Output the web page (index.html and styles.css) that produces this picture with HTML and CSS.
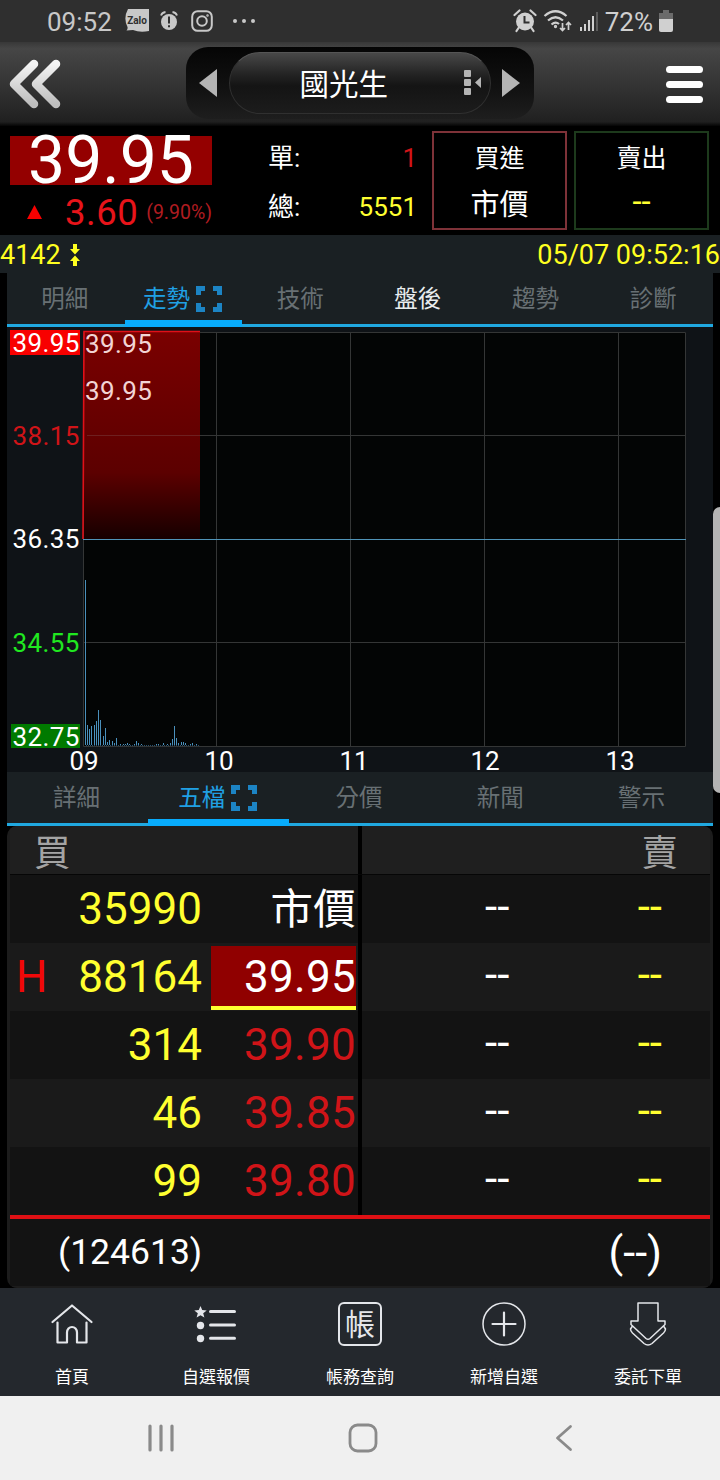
FILE: index.html
```html
<!DOCTYPE html>
<html lang="zh-Hant">
<head>
    <meta charset="UTF-8">
    <meta name="viewport" content="width=device-width, initial-scale=1.0">
    <title>國光生 4142</title>
    <link rel="stylesheet" href="styles.css">
</head>
<body>
    <!-- Status bar -->
    <div class="status_bar">
        <span class="status_time">09:52</span>
        <svg class="status_zalo" width="24" height="24" viewBox="0 0 24 24">
            <path d="M3 0h21v22q-9 2-16-1L1.500 21.500Q3 20 2.500 18Q-2 9 3 0Z" fill="#c8c8c8"/>
            <text x="12" y="14.500" text-anchor="middle" class="zalo_text">Zalo</text>
        </svg>
        <svg class="status_alert" width="18" height="20" viewBox="0 0 18 20">
            <circle cx="9" cy="11" r="8" fill="#c8c8c8"/>
            <path d="M1 4.500Q2 1.500 5.500 1M17 4.500Q16 1.500 12.500 1" stroke="#c8c8c8" stroke-width="1.800" fill="none"/>
            <path d="M9 5.500v7M9 14.300v2" stroke="#2f2f2f" stroke-width="2"/>
        </svg>
        <svg class="status_insta" width="22" height="22" viewBox="0 0 22 22" fill="none" stroke="#c8c8c8" stroke-width="2">
            <rect x="1.200" y="1.200" width="19.600" height="19.600" rx="5.500"/>
            <circle cx="11" cy="11" r="4.800"/>
            <circle cx="16.500" cy="5.500" r="0.500" stroke-width="1.500"/>
        </svg>
        <svg class="status_dots" width="24" height="6" viewBox="0 0 24 6" fill="#c8c8c8">
            <circle cx="3" cy="3" r="2"/><circle cx="12" cy="3" r="2"/><circle cx="21" cy="3" r="2"/>
        </svg>
        <div class="status_right">
            <svg width="24" height="24" viewBox="0 0 24 24">
                <circle cx="12" cy="12.500" r="9" fill="#d0d0d0"/>
                <path d="M1.500 6L6.500 1.500M22.500 6L17.500 1.500M5.500 19L3.500 22M18.500 19L20.500 22" stroke="#d0d0d0" stroke-width="2.200" stroke-linecap="round"/>
                <path d="M11.500 7v6.500h5" stroke="#2f2f2f" stroke-width="2" fill="none"/>
            </svg>
            <svg width="30" height="24" viewBox="0 0 30 24" fill="none" stroke="#d0d0d0" stroke-width="2.200">
                <path d="M1.500 7Q12.500-2.500 23.500 7M5 11.500Q12.500 5 20 11.500M8.500 15.500Q12.500 12 16 15"/>
                <circle cx="12.500" cy="17.500" r="0.900" stroke-width="1.500"/>
                <path d="M19.500 14v7M17 19l2.500 2.500L22 19M25.500 21v-7M23 16l2.500-2.500L28 16" stroke-width="1.700"/>
            </svg>
            <svg width="20" height="22" viewBox="0 0 20 22">
                <path d="M2 21v-4M6 21v-7M10 21V10M14 21V6" stroke="#d0d0d0" stroke-width="2"/>
                <path d="M18 21V2" stroke="#5c5c5c" stroke-width="2"/>
            </svg>
            <span class="battery_text">72%</span>
            <svg width="14" height="22" viewBox="0 0 14 22">
                <path d="M4 0h6v3h4v7H0V3h4Z" fill="#6b6b6b"/>
                <path d="M0 9h14v11q0 2-2 2H2q-2 0-2-2Z" fill="#d0d0d0"/>
            </svg>
        </div>
    </div>

    <!-- Title bar -->
    <header class="title_bar">
        <svg class="back_icon" width="54" height="52" viewBox="0 0 54 52">
            <defs>
                <linearGradient id="backFill" x1="0" y1="0" x2="0" y2="1">
                    <stop offset="0" stop-color="#f4f4f4"/>
                    <stop offset="1" stop-color="#bdbdbd"/>
                </linearGradient>
            </defs>
            <path d="M26 6L6 26L26 46M48 6L28 26L48 46" fill="none" stroke="url(#backFill)" stroke-width="8.500" stroke-linecap="round" stroke-linejoin="round"/>
        </svg>
        <div class="stock_picker">
            <svg width="18" height="28" viewBox="0 0 18 28"><path d="M18 0v28L0 14Z" fill="#b4b4b4"/></svg>
            <div class="stock_pill">
                <span class="stock_name">國光生</span>
                <svg class="list_icon" width="18" height="26" viewBox="0 0 18 26" fill="#b4b4b4">
                    <rect x="0" y="0" width="7" height="7" rx="1"/>
                    <rect x="0" y="9" width="7" height="7" rx="1"/>
                    <rect x="0" y="18" width="7" height="7" rx="1"/>
                    <path d="M17 7v11L11 12.500Z"/>
                </svg>
            </div>
            <svg width="18" height="28" viewBox="0 0 18 28"><path d="M0 0v28L18 14Z" fill="#b4b4b4"/></svg>
        </div>
        <div class="menu_icon"><span></span><span></span><span></span></div>
    </header>

    <!-- Quote summary -->
    <section class="quote">
        <div class="quote_price">
            <div class="price_now">39.95</div>
            <div class="price_change">
                <svg width="15" height="14" viewBox="0 0 15 14"><path d="M7.500 0L15 14H0Z" fill="#f80000"/></svg>
                <span class="change_value">3.60</span>
                <span class="change_rate">(9.90%)</span>
            </div>
        </div>
        <div class="quote_volume">
            <div class="volume_row"><span>單:</span><span class="red">1</span></div>
            <div class="volume_row"><span>總:</span><span class="yellow">5551</span></div>
        </div>
        <div class="trade_box buy_box">
            <span>買進</span>
            <span class="trade_market">市價</span>
        </div>
        <div class="trade_box sell_box">
            <span>賣出</span>
            <span class="trade_dash">--</span>
        </div>
    </section>

    <div class="code_bar">
        <span class="code">4142</span>
        <svg width="10" height="22" viewBox="0 0 10 22" fill="#ffff20">
            <path d="M3 0h4v5h3L5 10.500L0 5h3Z"/>
            <path d="M3 22h4v-5h3L5 11.500L0 17h3Z"/>
        </svg>
        <span class="timestamp">05/07 09:52:16</span>
    </div>

    <main class="panel">
        <nav class="tabs">
            <div class="tab">明細</div>
            <div class="tab active">走勢
                <svg class="expand" width="26" height="26" viewBox="0 0 26 26"><path d="M2.500 9V2.500H9M17 2.500h6.500V9M23.500 17v6.500H17M9 23.500H2.500V17"/></svg>
            </div>
            <div class="tab">技術</div>
            <div class="tab bright">盤後</div>
            <div class="tab">趨勢</div>
            <div class="tab">診斷</div>
        </nav>

        <!-- Intraday chart -->
        <svg class="chart" width="706" height="445" viewBox="0 0 706 445">
            <defs>
                <linearGradient id="priceFill" x1="0" y1="0" x2="0" y2="1">
                    <stop offset="0" stop-color="#7a0000"/>
                    <stop offset="0.680" stop-color="#5c0000"/>
                    <stop offset="1" stop-color="#160000"/>
                </linearGradient>
            </defs>
            <rect x="76" y="5" width="603" height="415" fill="#030505"/>
            <path class="grid" d="M76.500 5.500H678.500V419.500H76.500ZM209.500 5V419M343.500 5V419M477.500 5V419M611.500 5V419M77 108.500H678M77 315.500H678"/>
            <rect x="77" y="4" width="116" height="208" fill="url(#priceFill)"/>
            <path d="M80 108.500H193" stroke="#6e2020"/>
            <path class="base_line" d="M76 212.500H679"/>
            <path class="price_line" d="M76 212L77 4.500H193"/>
            <path class="volume" d="M78.500 418v-165M80.500 418v-20M82.500 418v-16M84.500 418v-19M87.500 418v-20M89.500 418v-24M91.500 418v-35M93.500 418v-25M96.500 418v-9M98.500 418v-17M100.500 418v-3M102.500 418v-5M105.500 418v-4M107.500 418v-2M109.500 418v-7M113.500 418v-1M116.500 418v-1M118.500 418v-1M120.500 418v-2M122.500 418v-1M127.500 418v-1M129.500 418v-4M131.500 418v-2M134.500 418v-1M149.500 418v-1M151.500 418v-1M156.500 418v-2M160.500 418v-1M163.500 418v-2M165.500 418v-6M167.500 418v-19M169.500 418v-7M171.500 418v-2M174.500 418v-3M176.500 418v-3M178.500 418v-2M183.500 418v-1M185.500 418v-2M189.500 418v-1"/>
            <path class="volume_floor" d="M79 418.500H193"/>
            <rect x="3" y="3" width="70" height="25" fill="#f80000"/>
            <rect x="4" y="397" width="69" height="24" fill="#007a00"/>
            <g class="axis">
                <text x="5.500" y="25" fill="#fff">39.95</text>
                <text x="5.500" y="118" fill="#d01418">38.15</text>
                <text x="5.500" y="221" fill="#fff">36.35</text>
                <text x="5.500" y="325" fill="#20e820">34.55</text>
                <text x="5.500" y="419" fill="#fff">32.75</text>
                <text x="78" y="26" fill="#f2d4d4">39.95</text>
                <text x="78" y="73" fill="#f2d4d4">39.95</text>
            </g>
            <g class="hours">
                <text x="77" y="442.500">09</text>
                <text x="212" y="442.500">10</text>
                <text x="347" y="442.500">11</text>
                <text x="478" y="442.500">12</text>
                <text x="613" y="442.500">13</text>
            </g>
        </svg>

        <nav class="tabs">
            <div class="tab">詳細</div>
            <div class="tab active">五檔
                <svg class="expand" width="26" height="26" viewBox="0 0 26 26"><path d="M2.500 9V2.500H9M17 2.500h6.500V9M23.500 17v6.500H17M9 23.500H2.500V17"/></svg>
            </div>
            <div class="tab">分價</div>
            <div class="tab">新聞</div>
            <div class="tab">警示</div>
        </nav>

        <!-- Best five -->
        <section class="depth">
            <div class="depth_head">
                <span>買</span>
                <span>賣</span>
            </div>
            <div class="depth_row">
                <span></span><span class="qty">35990</span><span class="price market">市價</span>
                <span class="ask">--</span><span class="ask_qty">--</span>
            </div>
            <div class="depth_row alt">
                <span class="high">H</span><span class="qty">88164</span><span class="price hit">39.95</span>
                <span class="ask">--</span><span class="ask_qty">--</span>
            </div>
            <div class="depth_row">
                <span></span><span class="qty">314</span><span class="price">39.90</span>
                <span class="ask">--</span><span class="ask_qty">--</span>
            </div>
            <div class="depth_row alt">
                <span></span><span class="qty">46</span><span class="price">39.85</span>
                <span class="ask">--</span><span class="ask_qty">--</span>
            </div>
            <div class="depth_row">
                <span></span><span class="qty">99</span><span class="price">39.80</span>
                <span class="ask">--</span><span class="ask_qty">--</span>
            </div>
            <div class="depth_total">
                <span class="total_buy">(124613)</span>
                <span class="total_sell">(--)</span>
            </div>
        </section>
    </main>

    <!-- App navigation -->
    <nav class="app_nav">
        <div class="nav_item">
            <svg width="44" height="44" viewBox="0 0 44 44" fill="none" stroke="#e4e6ea" stroke-width="2.200" stroke-linecap="round" stroke-linejoin="round">
                <path d="M2.500 20L22 3.500L41.500 20M7.500 20.500V40.500H17V30.500a5 5.500 0 0 1 10 0V40.500H36.500V20.500"/>
            </svg>
            <span>首頁</span>
        </div>
        <div class="nav_item">
            <svg width="44" height="44" viewBox="0 0 44 44" fill="#e4e6ea">
                <path d="M6.500 4l1.700 4.100 4.500.3-3.500 2.900 1.200 4.300-3.900-2.400-3.900 2.400 1.200-4.300L.3 8.400l4.500-.3Z"/>
                <circle cx="6.500" cy="23.500" r="3.700"/>
                <circle cx="6.500" cy="36.500" r="3.700"/>
                <path d="M16.500 9.500H40.500M16.500 23H40.500M16.500 36.300H40.500" stroke="#e4e6ea" stroke-width="3" stroke-linecap="round"/>
            </svg>
            <span>自選報價</span>
        </div>
        <div class="nav_item">
            <svg width="44" height="44" viewBox="0 0 44 44">
                <rect x="1" y="1" width="42" height="42" rx="5" fill="none" stroke="#e4e6ea" stroke-width="2"/>
                <text x="22" y="33" text-anchor="middle" class="account_text">帳</text>
            </svg>
            <span>帳務查詢</span>
        </div>
        <div class="nav_item">
            <svg width="44" height="44" viewBox="0 0 44 44" fill="none" stroke="#e4e6ea" stroke-linecap="round">
                <circle cx="22" cy="22" r="21" stroke-width="1.500"/>
                <path d="M22 10.500V33.500M10.500 22H33.500" stroke-width="2.200"/>
            </svg>
            <span>新增自選</span>
        </div>
        <div class="nav_item">
            <svg width="44" height="44" viewBox="0 0 44 44" fill="none" stroke="#e4e6ea" stroke-width="1.500" stroke-linejoin="round">
                <path d="M12 1h20v18h7v3.500L24 36.500q-2 1.500-4 0L5 22.500V19h7Z"/>
                <path d="M6.500 24L4.500 27q0 2 2 4L18 41.500q4 3 8 0L37.500 31q2-2 2-4L37.500 24"/>
            </svg>
            <span>委託下單</span>
        </div>
    </nav>

    <div class="system_nav">
        <svg width="28" height="28" viewBox="0 0 28 28"><path d="M3 2V26M14 2V26M25 2V26" stroke-width="3.200"/></svg>
        <svg width="30" height="30" viewBox="0 0 30 30"><rect x="2" y="2" width="26" height="26" rx="7.500" stroke-width="2.800"/></svg>
        <svg width="28" height="28" viewBox="0 0 28 28"><path d="M20.500 2.500L7.500 14L20.500 25.500" stroke-width="2.800"/></svg>
    </div>

    <div class="edge_handle"></div>
</body>
</html>
```
FILE: styles.css
```css
* {
    box-sizing: border-box;
}

body {
    margin: 0;
    width: 720px;
    height: 1480px;
    position: relative;
    overflow: hidden;
    background: #000;
    color: #fff;
    font-family: Roboto, 'Noto Sans CJK TC', sans-serif;
}

svg {
    display: block;
    flex: none;
}

.red {
    color: #d01418;
}

.yellow {
    color: #ffff30;
}

/* Status bar */
.status_bar {
    height: 42px;
    padding: 0 47px 0 47px;
    display: flex;
    align-items: center;
    background: #2f2f2f;
    color: #c8c8c8;
    font-size: 26px;
    line-height: 42px;
}

.status_time {
    width: 78px;
    padding-top: 2px;
}

.zalo_text {
    font-size: 10px;
    font-weight: 700;
    fill: #2f2f2f;
}

.status_alert {
    margin-left: 11px;
}

.status_insta {
    margin-left: 13px;
}

.status_dots {
    margin-left: 19px;
}

.status_right {
    margin-left: auto;
    display: flex;
    align-items: center;
    gap: 6px;
    color: #d0d0d0;
}

.battery_text {
    padding-top: 2px;
}

/* Title bar */
.title_bar {
    height: 84px;
    padding: 5px 17px 0 8px;
    display: flex;
    align-items: flex-start;
    justify-content: space-between;
    background: linear-gradient(#383838, #464646 8%, #303030 60%, #202020 95%, #050505);
}

.back_icon {
    margin-top: 11px;
}

.stock_picker {
    width: 348px;
    height: 72px;
    margin-right: 8px;
    padding: 0 14px 0 13px;
    display: flex;
    align-items: center;
    justify-content: space-between;
    border-radius: 22px;
    background: linear-gradient(#050505, #121212 60%, #1e1e1e);
}

.stock_pill {
    width: 262px;
    height: 62px;
    padding: 0 8px 0 70px;
    display: flex;
    align-items: center;
    justify-content: space-between;
    border: 1px solid #303030;
    border-top-color: #555;
    border-radius: 31px;
    background: linear-gradient(#484848, #242424 35%, #141414 55%, #1c1c1c);
}

.stock_name {
    padding-top: 4px;
    font-size: 29.5px;
    line-height: 56px;
}

.menu_icon {
    width: 37px;
    margin-top: 19px;
    display: flex;
    flex-direction: column;
    gap: 8px;
}

.menu_icon span {
    height: 7px;
    border-radius: 4px;
    background: #fff;
}

/* Quote summary */
.quote {
    height: 109px;
    padding: 5px 11px 5px 10px;
    display: flex;
    background: #000;
}

.quote_price {
    width: 202px;
    padding-top: 5px;
}

.price_now {
    height: 49px;
    background: #940000;
    font-size: 66px;
    line-height: 50px;
    text-align: center;
}

.price_change {
    height: 52px;
    padding: 2px 0 0 17px;
    display: flex;
    align-items: center;
    color: #e8141a;
}

.change_value {
    width: 107px;
    padding-left: 23px;
    font-size: 36.5px;
    letter-spacing: 0.5px;
}

.change_rate {
    color: #b01c20;
    font-size: 19.5px;
}

.quote_volume {
    width: 149px;
    margin: 0 15px 0 56px;
    font-size: 26px;
}

.volume_row {
    height: 49px;
    display: flex;
    align-items: center;
    justify-content: space-between;
    line-height: 46px;
    padding-top: 4px;
}

.trade_box {
    width: 135px;
    height: 99px;
    margin-right: 7px;
    display: grid;
    grid-template-rows: 45px 47px;
    justify-items: center;
    align-items: center;
    border: 2px solid;
    font-size: 25px;
}

.buy_box {
    border-color: #7e3238;
}

.sell_box {
    border-color: #1d3a1c;
    margin-right: 0;
}

.trade_market {
    font-size: 29px;
}

.trade_dash {
    color: #ffff30;
    font-size: 33px;
}

.code_bar {
    height: 38px;
    padding-top: 1px;
    display: flex;
    align-items: center;
    background: #1a2023;
    color: #ffff20;
    font-size: 27px;
    line-height: 38px;
}

.code_bar svg {
    margin-left: 9px;
}

.timestamp {
    margin-left: auto;
}

/* Tabs */
.panel {
    padding: 0 7px;
}

.tabs {
    height: 54px;
    display: flex;
    border-bottom: 3px solid #20a8e0;
    background: #1a2023;
}

.tab {
    flex: 1 1 0;
    min-width: 0;
    height: 54px;
    padding: 0 2px 6px 0;
    display: flex;
    align-items: center;
    justify-content: center;
    gap: 6px;
    color: #687074;
    font-size: 23.5px;
}

.tab.active {
    background: linear-gradient(#08acfc, #08acfc) bottom / 100% 7px no-repeat;
    color: #20a0e4;
}

.tab.bright {
    color: #e8ecee;
}

.expand {
    margin-top: 4px;
    fill: none;
    stroke: #1c84c4;
    stroke-width: 5;
}

/* Intraday chart */
.chart {
    position: relative;
    overflow: visible;
    background: #0f1317;
}

.grid {
    fill: none;
    stroke: #343636;
}

.base_line {
    stroke: #5094b8;
}

.price_line {
    fill: none;
    stroke: #e01018;
    stroke-width: 1.6;
}

.volume {
    stroke: #4a90bc;
}

.volume_floor {
    stroke: #28506c;
    stroke-dasharray: 1 1;
}

.axis text {
    font-size: 26px;
    letter-spacing: 0.4px;
}

.hours text {
    font-size: 26px;
    fill: #fff;
    text-anchor: middle;
}

/* Best five */
.depth {
    height: 462px;
    padding: 0 3px;
    border-radius: 10px;
    overflow: hidden;
    background: #1c1c1c;
}

.depth_head {
    height: 49px;
    padding: 7px 32px 0 24px;
    display: flex;
    align-items: center;
    justify-content: space-between;
    border-bottom: 1px solid #060606;
    background: linear-gradient(90deg, transparent 348px, #000 348px, #000 352px, transparent 352px), #1f1f1f;
    color: #a4a4a4;
    font-size: 36.5px;
    line-height: 40px;
}

.depth_row {
    height: 68px;
    display: grid;
    grid-template-columns: 37px 155px 154px 6px 1fr 1fr;
    align-items: center;
    background: linear-gradient(90deg, transparent 348px, #000 348px, #000 352px, transparent 352px), #131313;
    font-size: 44px;
    line-height: 68px;
}

.depth_row.alt {
    background: linear-gradient(90deg, transparent 348px, #000 348px, #000 352px, transparent 352px), #1a1a1a;
}

.qty {
    color: #ffff30;
    text-align: right;
}

.high {
    padding-left: 6px;
    color: #f00808;
}

.price {
    height: 64px;
    margin-left: 9px;
    color: #d01418;
    line-height: 64px;
    text-align: right;
    letter-spacing: 0.3px;
}

.price.market {
    color: #fff;
    font-size: 42.5px;
    line-height: 66px;
}

.price.hit {
    margin-top: 2px;
    border-bottom: 4px solid #ffff30;
    background: #900000;
    color: #fff;
    line-height: 62px;
}

.ask,
.ask_qty {
    line-height: 64px;
    padding-bottom: 4px;
}

.ask {
    grid-column: 5;
    padding-left: 123px;
}

.ask_qty {
    padding-right: 48px;
    color: #ffff30;
    text-align: right;
}

.depth_total {
    height: 73px;
    padding: 0 48px 2px 48px;
    display: flex;
    align-items: center;
    justify-content: space-between;
    border-top: 4px solid #e01014;
    border-bottom: 2px solid #1c1c1c;
    background: #131313;
}

.total_buy {
    font-size: 35.5px;
}

.total_sell {
    font-size: 43px;
}

/* App navigation */
.app_nav {
    height: 108px;
    display: flex;
    background: #24282d;
}

.nav_item {
    flex: 1;
    padding-top: 14px;
    display: flex;
    flex-direction: column;
    align-items: center;
    gap: 18px;
    font-size: 17px;
    line-height: 26px;
}

.account_text {
    fill: #e4e6ea;
    font-size: 30px;
}

.system_nav {
    height: 84px;
    padding: 0 142px 0 147px;
    display: flex;
    align-items: center;
    justify-content: space-between;
    background: #f0f0f0;
    fill: none;
    stroke: #8a8a8a;
    stroke-linecap: round;
    stroke-linejoin: round;
}

.edge_handle {
    position: absolute;
    top: 507px;
    right: 0;
    width: 7px;
    height: 286px;
    border-radius: 7px 0 0 7px;
    background: #b4b4b4;
}
```
